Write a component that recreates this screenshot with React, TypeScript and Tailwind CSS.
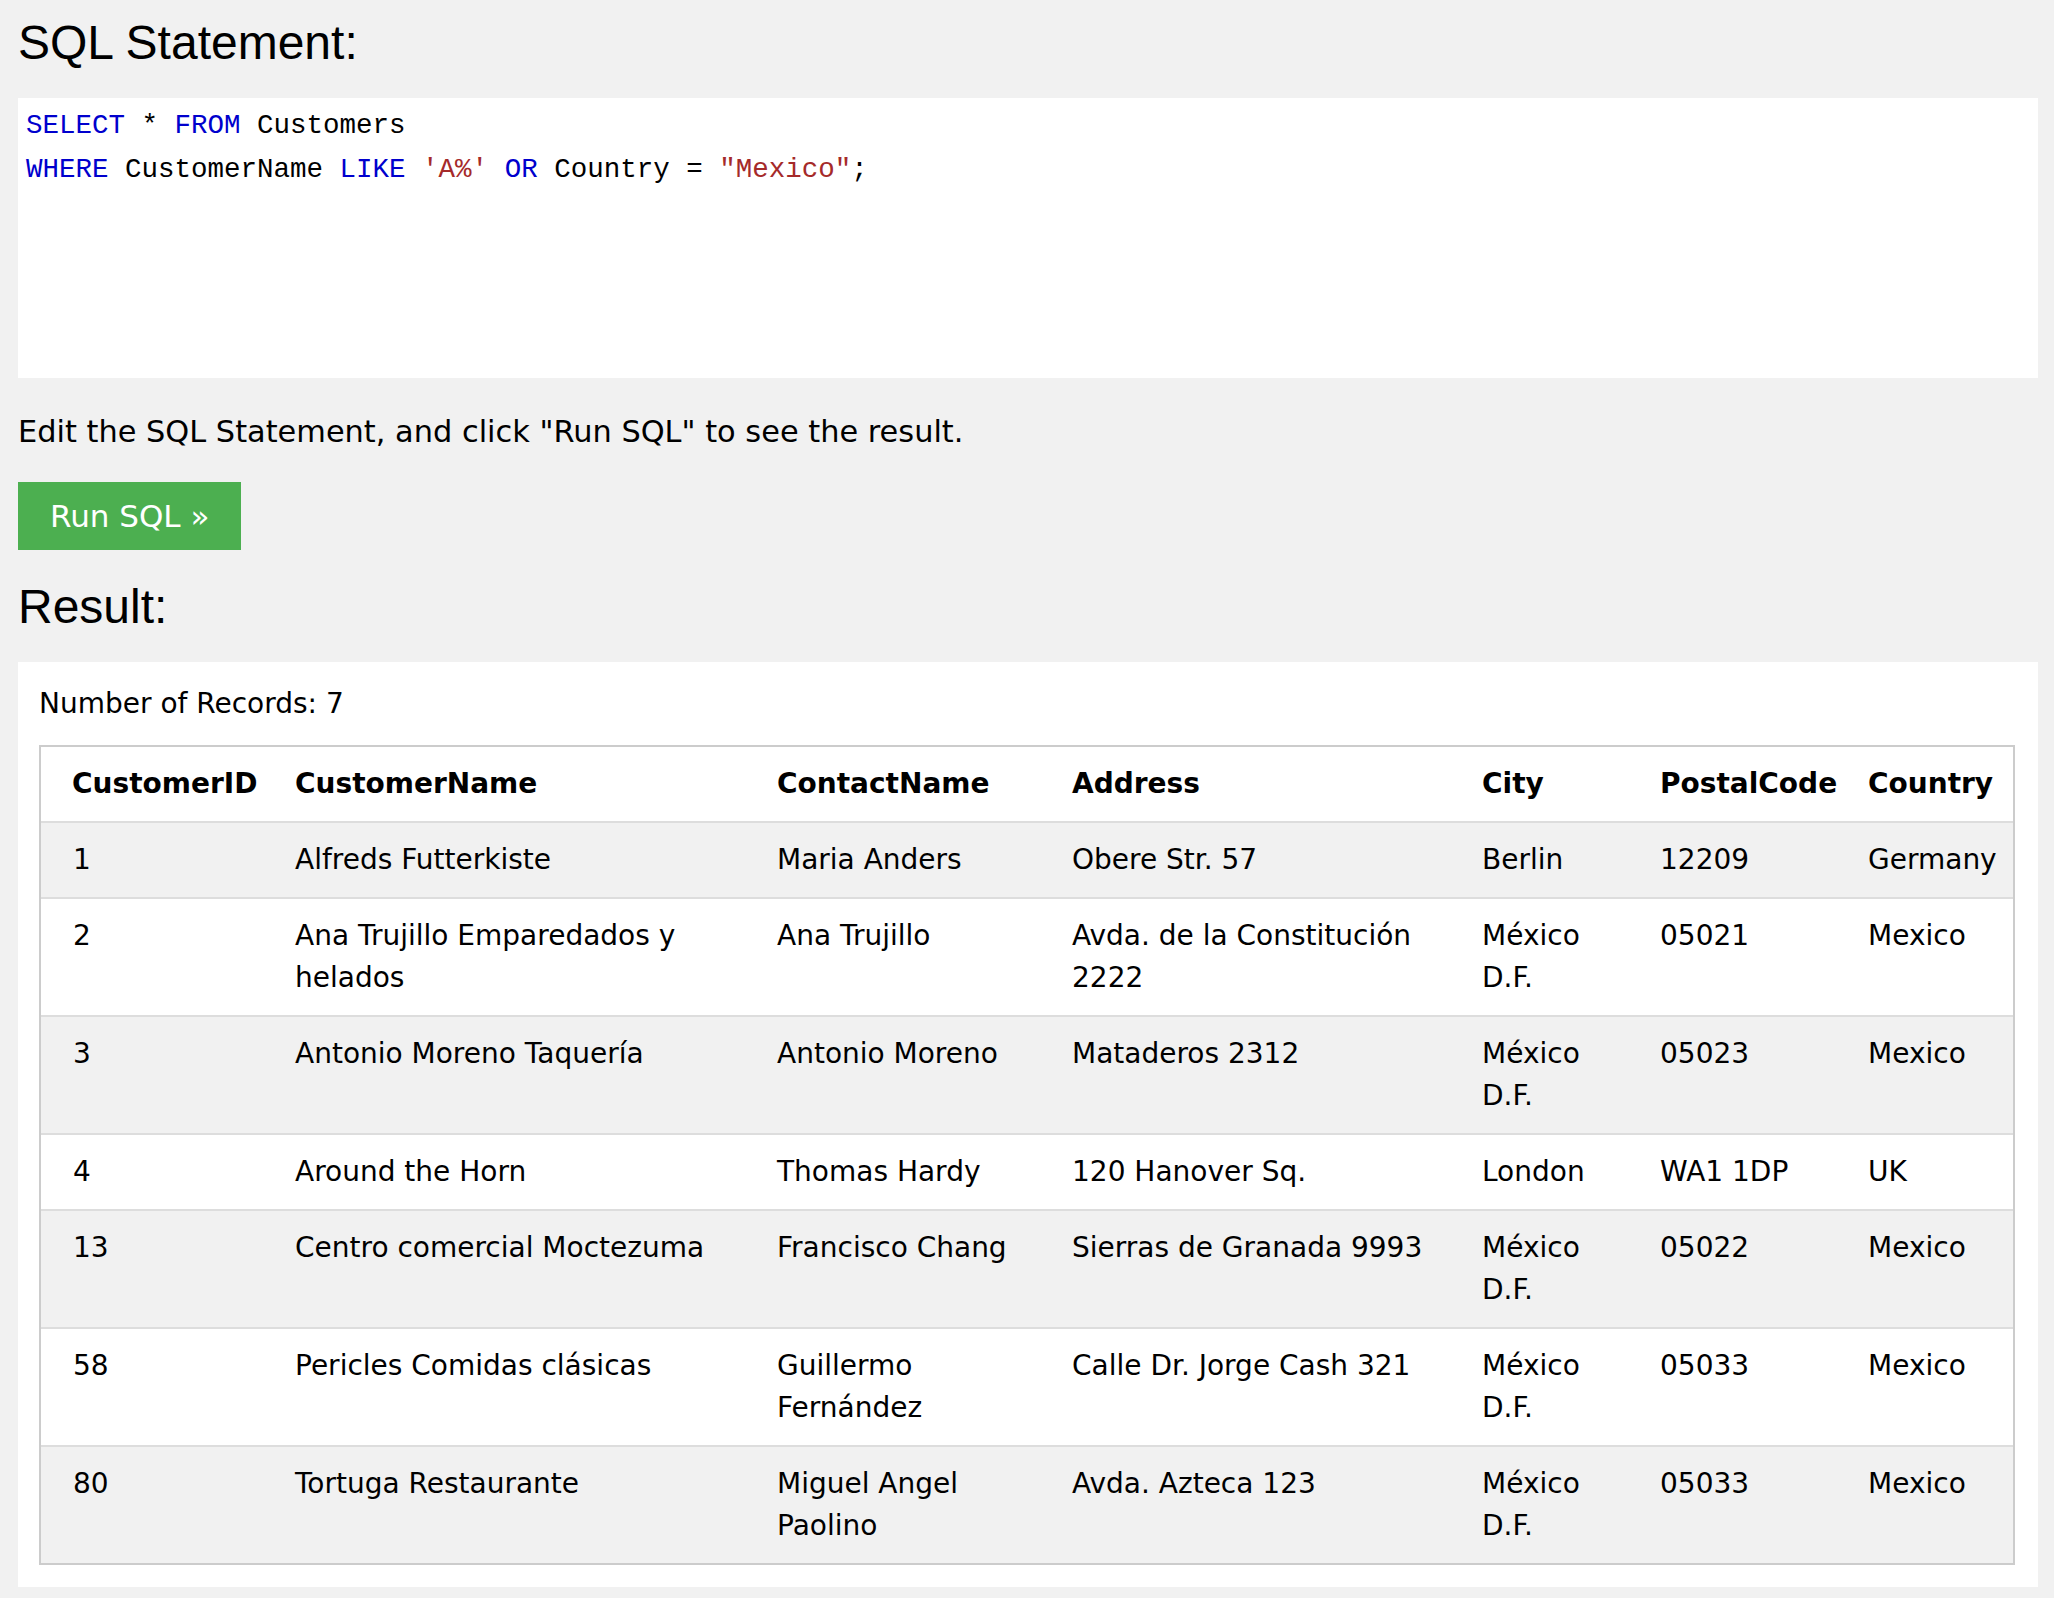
const rows = [
  { id: "1", name: "Alfreds Futterkiste", contact: "Maria Anders", address: "Obere Str. 57", city: "Berlin", postal: "12209", country: "Germany" },
  { id: "2", name: "Ana Trujillo Emparedados y helados", contact: "Ana Trujillo", address: "Avda. de la Constitución 2222", city: "México D.F.", postal: "05021", country: "Mexico" },
  { id: "3", name: "Antonio Moreno Taquería", contact: "Antonio Moreno", address: "Mataderos 2312", city: "México D.F.", postal: "05023", country: "Mexico" },
  { id: "4", name: "Around the Horn", contact: "Thomas Hardy", address: "120 Hanover Sq.", city: "London", postal: "WA1 1DP", country: "UK" },
  { id: "13", name: "Centro comercial Moctezuma", contact: "Francisco Chang", address: "Sierras de Granada 9993", city: "México D.F.", postal: "05022", country: "Mexico" },
  { id: "58", name: "Pericles Comidas clásicas", contact: "Guillermo Fernández", address: "Calle Dr. Jorge Cash 321", city: "México D.F.", postal: "05033", country: "Mexico" },
  { id: "80", name: "Tortuga Restaurante", contact: "Miguel Angel Paolino", address: "Avda. Azteca 123", city: "México D.F.", postal: "05033", country: "Mexico" },
];

export default function App() {
  return (
    <div className="min-h-[1598px] bg-[#f1f1f1] pl-[18px] pr-[16px] pt-[15px] text-black font-['DejaVu_Sans',Verdana,sans-serif] text-[28px] leading-[42px]">
      <h2 className="font-['Liberation_Sans',Arial,sans-serif] text-[48px] leading-[55px] font-normal">SQL Statement:</h2>

      <div className="mt-[28px] h-[280px] bg-white pl-[8px] pt-[6px] font-['Liberation_Mono',monospace] text-[27.5px] leading-[44px] whitespace-pre">
        <div>
          <span className="text-[#0000cd]">SELECT</span> * <span className="text-[#0000cd]">FROM</span> Customers
        </div>
        <div>
          <span className="text-[#0000cd]">WHERE</span> CustomerName <span className="text-[#0000cd]">LIKE</span>{" "}
          <span className="text-[#a52a2a]">'A%'</span> <span className="text-[#0000cd]">OR</span> Country ={" "}
          <span className="text-[#a52a2a]">"Mexico"</span>;
        </div>
      </div>

      <p className="mt-[31px] text-[30.4px] leading-[45px]">Edit the SQL Statement, and click "Run SQL" to see the result.</p>

      <button className="mt-[28px] flex h-[68px] items-center bg-[#4caf50] px-[32px] text-[31px] text-white">Run SQL »</button>

      <h2 className="mt-[29px] font-['Liberation_Sans',Arial,sans-serif] text-[48px] leading-[55px] font-normal">Result:</h2>

      <div className="mt-[28px] bg-white pl-[21px] pr-[23px] pt-[21px] pb-[22px]">
        <p>Number of Records: 7</p>
        <table className="mt-[20px] w-full table-fixed border-separate border-spacing-0 border-2 border-[#ccc] text-left">
          <thead>
            <tr className="bg-white">
              <th className="w-[238px] whitespace-nowrap border-b-2 border-[#ddd] pl-[31px] pr-[16px] py-[16px] font-bold">CustomerID</th>
              <th className="w-[482px] whitespace-nowrap border-b-2 border-[#ddd] px-[16px] py-[16px] font-bold">CustomerName</th>
              <th className="w-[295px] whitespace-nowrap border-b-2 border-[#ddd] px-[16px] py-[16px] font-bold">ContactName</th>
              <th className="w-[410px] whitespace-nowrap border-b-2 border-[#ddd] px-[16px] py-[16px] font-bold">Address</th>
              <th className="w-[178px] whitespace-nowrap border-b-2 border-[#ddd] px-[16px] py-[16px] font-bold">City</th>
              <th className="w-[208px] whitespace-nowrap border-b-2 border-[#ddd] px-[16px] py-[16px] font-bold">PostalCode</th>
              <th className="w-[161px] whitespace-nowrap border-b-2 border-[#ddd] px-[16px] py-[16px] font-bold">Country</th>
            </tr>
          </thead>
          <tbody>
            {rows.map((r, i) => {
              const last = i === rows.length - 1;
              const cell = last ? "align-top px-[16px] py-[16px]" : "align-top px-[16px] py-[16px] border-b-2 border-[#ddd]";
              return (
                <tr key={r.id} className={i % 2 === 0 ? "bg-[#f1f1f1]" : "bg-white"}>
                  <td className={cell + " pl-[32px]"}>{r.id}</td>
                  <td className={cell}>{r.name}</td>
                  <td className={cell}>{r.contact}</td>
                  <td className={cell}>{r.address}</td>
                  <td className={cell}>{r.city}</td>
                  <td className={cell}>{r.postal}</td>
                  <td className={cell}>{r.country}</td>
                </tr>
              );
            })}
          </tbody>
        </table>
      </div>
    </div>
  );
}
